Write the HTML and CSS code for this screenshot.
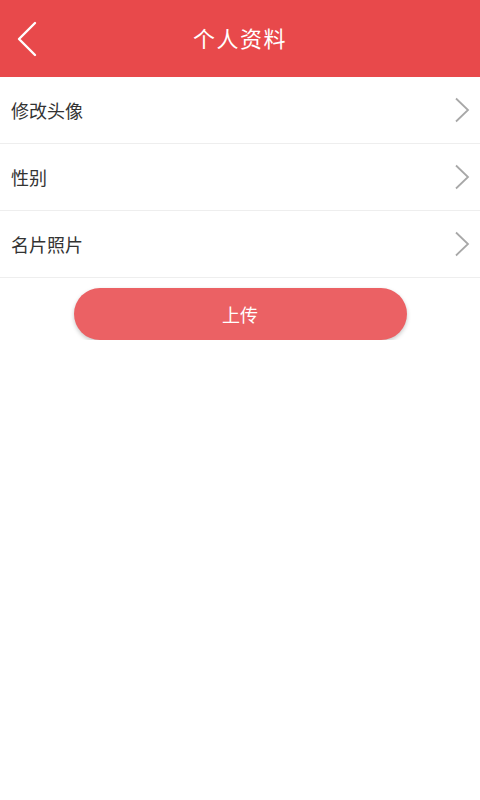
FILE: index.html
```html
<!DOCTYPE html>
<html lang="zh-CN">
<head>
  <meta charset="UTF-8">
  <title>个人资料</title>
  <link rel="stylesheet" href="styles.css">
</head>
<body>
  <!-- 顶部栏 -->
  <div class="topbar">
    <a class="back" href="#">
      <svg width="22" height="36" viewBox="0 0 22 36">
        <polyline points="19,2 3,18 19,34" fill="none" stroke="#fff" stroke-width="2.4" stroke-linecap="round" stroke-linejoin="round"/>
      </svg>
    </a>
    <h1 class="title">个人资料</h1>
  </div>

  <!-- 资料列表 -->
  <ul class="menu">
    <li class="menu-item">
      <span>修改头像</span>
      <svg class="arrow" width="16" height="26" viewBox="0 0 16 26">
        <polyline points="2,1.5 14,13 2,24.5" fill="none" stroke="#a8a8a8" stroke-width="1.8"/>
      </svg>
    </li>
    <li class="menu-item">
      <span>性别</span>
      <svg class="arrow" width="16" height="26" viewBox="0 0 16 26">
        <polyline points="2,1.5 14,13 2,24.5" fill="none" stroke="#a8a8a8" stroke-width="1.8"/>
      </svg>
    </li>
    <li class="menu-item">
      <span>名片照片</span>
      <svg class="arrow" width="16" height="26" viewBox="0 0 16 26">
        <polyline points="2,1.5 14,13 2,24.5" fill="none" stroke="#a8a8a8" stroke-width="1.8"/>
      </svg>
    </li>
  </ul>

  <div class="actions">
    <button class="upload">上传</button>
  </div>
</body>
</html>
```

FILE: styles.css
```css
body {
  margin: 0;
  background-color: #fff;
  font-family: "Noto Sans CJK SC", "Noto Sans", sans-serif;
}

.topbar {
  position: relative;
  height: 77px;
  background-color: #e8494b;
  display: flex;
  align-items: center;
  justify-content: center;
}

.back {
  position: absolute;
  left: 16px;
  top: 21px;
  display: block;
  height: 36px;
}

.title {
  margin: 0 0 4px;
  color: #fff;
  font-size: 22px;
  font-weight: normal;
  letter-spacing: 1.5px;
}

.menu {
  list-style: none;
  margin: 0;
  padding: 0;
}

.menu-item {
  height: 66px;
  border-bottom: 1px solid #eeeeee;
  display: flex;
  align-items: center;
  justify-content: space-between;
  padding: 0 10px 0 11px;
  font-size: 18px;
  color: #333;
}

.actions {
  display: flex;
  justify-content: center;
  padding-top: 10px;
}

.upload {
  width: 333px;
  height: 52px;
  border: none;
  border-radius: 26px;
  background-color: #eb6164;
  color: #fff;
  font-family: inherit;
  font-size: 18px;
  box-shadow: 0 2px 4px rgba(0, 0, 0, 0.22);
  cursor: pointer;
}
```
